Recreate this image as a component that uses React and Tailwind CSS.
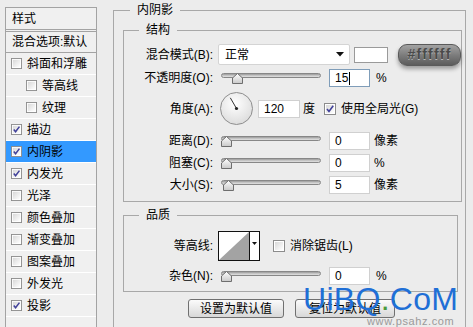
import React from 'react'

const FONT = "font-['Liberation_Sans','Noto_Sans_CJK_SC',sans-serif]"

const Check = ({ on, size = 11 }) => (
  <svg width={size} height={size} viewBox="0 0 12 12" className="shrink-0">
    <defs>
      <linearGradient id="cbg" x1="0" y1="0" x2="1" y2="1">
        <stop offset="0" stopColor="#d8d8d8" />
        <stop offset="1" stopColor="#ffffff" />
      </linearGradient>
    </defs>
    <rect x="0.5" y="0.5" width="11" height="11" fill="#fff" stroke="#8c8c8c" />
    <rect x="2" y="2" width="8" height="8" fill="url(#cbg)" />
    {on && <path d="M3 6 L5 8.5 L9.2 2.8" fill="none" stroke="#41419a" strokeWidth="1.6" />}
  </svg>
)

const Slider = ({ pos = 0 }) => (
  <div className="relative w-[100px] h-[18px] ml-[8px] shrink-0">
    <div className="absolute left-0 right-0 top-[4px] h-[5px] rounded-full border border-[#878787] bg-linear-to-b from-[#9a9a9a] via-[#c4c4c4] to-[#e2e2e2]" />
    <svg className="absolute top-[4px]" style={{ left: pos }} width="11" height="11" viewBox="0 0 11 11">
      <defs>
        <linearGradient id="thb" x1="0" y1="0" x2="0" y2="1">
          <stop offset="0" stopColor="#ffffff" />
          <stop offset="1" stopColor="#c9c9c9" />
        </linearGradient>
      </defs>
      <path d="M5.5 0.5 L10.5 5 L10.5 10.5 L0.5 10.5 L0.5 5 Z" fill="url(#thb)" stroke="#6e6e6e" />
    </svg>
  </div>
)

const Field = ({ value, focus, w = 41, ml = 8 }) => (
  <div
    className={`h-[18px] bg-white flex items-center pl-[5px] text-[12px] shrink-0 border ${
      focus ? 'border-[#7f9db9]' : 'border-[#d0d0d0]'
    }`}
    style={{ width: w, marginLeft: ml }}
  >
    {value}
    {focus && <span className="w-px h-[13px] bg-black ml-[1px]" />}
  </div>
)

const Label = ({ children }) => (
  <div className="w-[89px] text-right shrink-0 whitespace-nowrap">{children}</div>
)

const Dial = () => (
  <svg width="33" height="33" viewBox="0 0 33 33" className="ml-[7px] shrink-0">
    <defs>
      <radialGradient id="dial" cx="0.45" cy="0.35" r="0.7">
        <stop offset="0" stopColor="#ffffff" />
        <stop offset="1" stopColor="#dadada" />
      </radialGradient>
    </defs>
    <circle cx="16.5" cy="16.5" r="16" fill="url(#dial)" stroke="#8e8e8e" />
    <line x1="16.5" y1="16.5" x2="10.3" y2="5.8" stroke="#333" strokeWidth="1" />
    <circle cx="16.5" cy="16.5" r="1.6" fill="#222" />
  </svg>
)

const items = [
  { t: '斜面和浮雕' },
  { t: '等高线', indent: true },
  { t: '纹理', indent: true },
  { t: '描边', on: true },
  { t: '内阴影', on: true, active: true },
  { t: '内发光', on: true },
  { t: '光泽' },
  { t: '颜色叠加' },
  { t: '渐变叠加' },
  { t: '图案叠加' },
  { t: '外发光' },
  { t: '投影', on: true },
]

const Sidebar = () => (
  <div className="ml-[5px] mt-[7px] w-[92px] shrink-0 border-x border-t border-[#a3a3a3] bg-[#f0f0f0]">
    <div className="h-[22px] flex items-center pl-[6px] border-b border-[#a3a3a3]">样式</div>
    <div className="h-[1px]" />
    <div className="h-[22px] flex items-center pl-[6px] border-y border-[#a3a3a3] whitespace-nowrap">
      混合选项:默认
    </div>
    {items.map((it) => (
      <div
        key={it.t}
        className={`h-[22px] flex items-center border-b border-white ${it.indent ? 'pl-[20px]' : 'pl-[5px]'} ${
          it.active ? 'bg-[#3399ff]' : ''
        }`}
      >
        <Check on={it.on} />
        <span className="ml-[5px]">{it.t}</span>
      </div>
    ))}
  </div>
)

const Legend = ({ children, ml }) => (
  <legend className="px-[7px] leading-[20px] text-[12px]" style={{ marginLeft: ml }}>
    {children}
  </legend>
)

export default function App() {
  return (
    <div className={`relative w-[473px] h-[327px] overflow-hidden bg-[#ececec] flex text-[12px] text-black ${FONT}`}>
      <Sidebar />

      <fieldset className="ml-[16px] w-[353px] border border-b-0 border-[#a8a8a8] pb-[30px] shrink-0">
        <Legend ml={16}>内阴影</Legend>

        <fieldset className="ml-[9px] w-[335px] border border-[#a8a8a8] pb-[7px]">
          <Legend ml={15}>结构</Legend>

          <div className="mt-[4px] h-[21px] flex items-center">
            <Label>混合模式(B):</Label>
            <div className="ml-[5px] w-[132px] h-[21px] shrink-0 bg-white border border-[#d4d4d4] rounded-[2px] flex items-center justify-between pl-[6px] pr-[5px]">
              <span>正常</span>
              <svg width="8" height="5" viewBox="0 0 8 5">
                <path d="M0 0 H8 L4 4.5 Z" fill="#111" />
              </svg>
            </div>
            <div className="ml-[4px] w-[34px] h-[16px] shrink-0 bg-white border border-[#9a9a9a]" />
            <div className="ml-[10px] w-[63px] h-[22px] shrink-0 rounded-[9px] border border-[#5a5a5a] bg-linear-to-b from-[#a3a3a3] via-[#7d7d7d] to-[#5c5c5c] shadow-[0_3px_4px_rgba(0,0,0,0.35)] flex items-center justify-center text-[14px] font-bold tracking-[1.2px] text-[#4a4a4a] [text-shadow:0_1px_0_#b8b8b8] font-['Liberation_Sans',sans-serif]">
              #ffffff
            </div>
          </div>

          <div className="mt-[4px] h-[18px] flex items-center">
            <Label>不透明度(O):</Label>
            <Slider pos={11} />
            <Field value="15" focus />
            <span className="ml-[6px]">%</span>
          </div>

          <div className="mt-[5px] h-[33px] flex items-center">
            <Label>角度(A):</Label>
            <Dial />
            <Field value="120" w={42} ml={5} />
            <span className="ml-[3px]">度</span>
            <div className="ml-[9px] flex items-center">
              <Check on size={12} />
            </div>
            <span className="ml-[5px] whitespace-nowrap">使用全局光(G)</span>
          </div>

          {[
            ['距离(D):', '0', '像素', 0],
            ['阻塞(C):', '0', '%', 0],
            ['大小(S):', '5', '像素', 2],
          ].map(([l, v, u, p], i) => (
            <div key={l} className={`${i === 0 ? 'mt-[7px]' : 'mt-[4px]'} h-[18px] flex items-center`}>
              <Label>{l}</Label>
              <Slider pos={p} />
              <Field value={v} />
              <span className="ml-[4px]">{u}</span>
            </div>
          ))}
        </fieldset>

        <fieldset className="mt-[3px] ml-[9px] w-[335px] border border-[#a8a8a8] pb-[6px]">
          <Legend ml={15}>品质</Legend>

          <div className="mt-[6px] h-[30px] flex items-center">
            <Label>等高线:</Label>
            <svg width="42" height="30" viewBox="0 0 42 30" className="ml-[5px] shrink-0">
              <rect x="0.5" y="0.5" width="41" height="29" fill="#fff" stroke="#111" />
              <path d="M1 29 L31 1 L31 29 Z" fill="#a3a3a3" />
              <line x1="31.5" y1="1" x2="31.5" y2="29" stroke="#111" />
              <path d="M34 11 H39 L36.5 14 Z" fill="#111" />
            </svg>
            <div className="ml-[13px] flex items-center">
              <Check size={12} />
            </div>
            <span className="ml-[5px] whitespace-nowrap">消除锯齿(L)</span>
          </div>

          <div className="mt-[6px] h-[18px] flex items-center">
            <Label>杂色(N):</Label>
            <Slider pos={0} />
            <Field value="0" />
            <span className="ml-[6px]">%</span>
          </div>
        </fieldset>

        <div className="mt-[7px] flex">
          <div className="ml-[74px] w-[96px] h-[19px] rounded-[3px] border border-[#707070] bg-linear-to-b from-[#fbfbfb] to-[#d8d8d8] flex items-center justify-center whitespace-nowrap">
            设置为默认值
          </div>
          <div className="ml-[11px] w-[100px] h-[19px] rounded-[3px] border border-[#707070] bg-linear-to-b from-[#fbfbfb] to-[#d8d8d8] flex items-center justify-center whitespace-nowrap">
            复位为默认值
          </div>
        </div>
      </fieldset>

      <div className="absolute left-[303px] top-[282px] flex flex-col items-end pointer-events-none">
        <div className="text-[32px] leading-[34px] text-[#1f6fd6] tracking-[0.3px] font-['Liberation_Sans',sans-serif]">
          UiBQ<span className="text-[#4a9a3a]">.</span>CoM
        </div>
        <div className="text-[11px] leading-[10px] text-[#9a9a9a] tracking-[0.6px] mr-[4px] font-['Liberation_Sans',sans-serif]">
          www.psahz.com
        </div>
      </div>
    </div>
  )
}
